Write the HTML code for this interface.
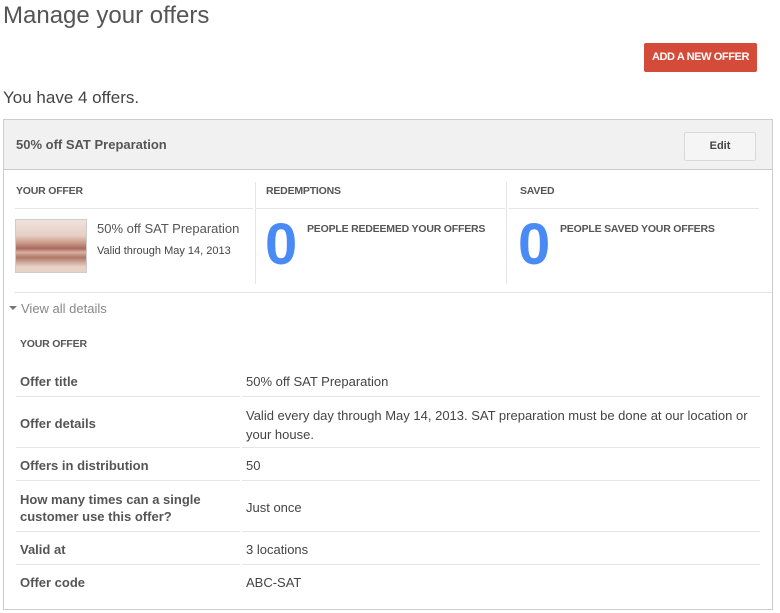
<!DOCTYPE html>
<html><head><meta charset="utf-8"><style>
*{margin:0;padding:0;box-sizing:border-box}
body{width:780px;height:613px;background:#fff;font-family:"Liberation Sans",Arial,sans-serif;color:#444;position:relative;overflow:hidden}
.a{position:absolute;white-space:nowrap}
.h{font-size:10.5px;font-weight:bold;color:#555;letter-spacing:-0.2px}
.hl{position:absolute;height:1px;background:#e5e5e5}
.vl{position:absolute;width:1px;background:#e5e5e5}
.lab{font-size:13px;font-weight:bold;color:#555}
.val{font-size:13px;color:#444}
</style></head><body>
<div class="a" style="left:3px;top:2px;font-size:24px;color:#555">Manage your offers</div>
<div class="a" style="left:644px;top:43px;width:113px;height:29px;background:#d44b39;border-radius:2px;color:#fff;font-size:11px;font-weight:bold;text-align:center;line-height:29px;letter-spacing:-0.4px">ADD A NEW OFFER</div>
<div class="a" style="left:3px;top:88px;font-size:17px;color:#444">You have 4 offers.</div>

<div class="a" style="left:3px;top:119px;width:770px;height:491px;border:1px solid #ccc"></div>
<div class="a" style="left:4px;top:120px;width:768px;height:50px;background:#f1f1f1;border-bottom:1px solid #ccc"></div>
<div class="a" style="left:16px;top:137px;font-size:13px;font-weight:bold;color:#555">50% off SAT Preparation</div>
<div class="a" style="left:684px;top:132px;width:72px;height:29px;border:1px solid #d9d9d9;border-radius:2px;background:#f5f5f5;font-size:11px;font-weight:bold;color:#444;text-align:center;line-height:27px">Edit</div>

<div class="a h" style="left:16px;top:185px">YOUR OFFER</div>
<div class="a h" style="left:266px;top:185px">REDEMPTIONS</div>
<div class="a h" style="left:520px;top:185px">SAVED</div>
<div class="hl" style="left:15px;top:208px;width:238px"></div>
<div class="hl" style="left:256px;top:208px;width:249px"></div>
<div class="hl" style="left:509px;top:208px;width:250px"></div>
<div class="vl" style="left:255px;top:182px;height:102px"></div>
<div class="vl" style="left:506px;top:182px;height:102px"></div>

<div class="a" style="left:15px;top:219px;width:72px;height:54px;border:1px solid #ccc;background:linear-gradient(180deg,#efe3dc 0%,#e6cfc4 30%,#c99685 45%,#a86a5e 55%,#d8b0a2 62%,#b07868 72%,#e8d2c8 90%)"></div>
<div class="a" style="left:97px;top:221px;font-size:13px;color:#555">50% off SAT Preparation</div>
<div class="a" style="left:97px;top:245px;font-size:11px;color:#444">Valid through May 14, 2013</div>

<div class="a" style="left:265px;top:208px;font-size:58px;font-weight:bold;color:#4a8af4;line-height:74px">0</div>
<div class="a h" style="left:307px;top:223px">PEOPLE REDEEMED YOUR OFFERS</div>
<div class="a" style="left:518px;top:208px;font-size:58px;font-weight:bold;color:#4a8af4;line-height:74px">0</div>
<div class="a h" style="left:560px;top:223px">PEOPLE SAVED YOUR OFFERS</div>

<div class="hl" style="left:14px;top:292px;width:758px"></div>
<div class="a" style="left:9px;top:306px;width:0;height:0;border-left:4px solid transparent;border-right:4px solid transparent;border-top:4px solid #777"></div>
<div class="a" style="left:21px;top:301px;font-size:13px;color:#888">View all details</div>

<div class="a h" style="left:20px;top:338px">YOUR OFFER</div>

<div class="a lab" style="left:20px;top:374px">Offer title</div>
<div class="a val" style="left:246px;top:374px">50% off SAT Preparation</div>
<div class="hl" style="left:16px;top:396px;width:224px"></div><div class="hl" style="left:242px;top:396px;width:518px"></div>
<div class="a lab" style="left:20px;top:416px">Offer details</div>
<div class="a val" style="left:246px;top:406px;line-height:19px">Valid every day through May 14, 2013. SAT preparation must be done at our location or<br>your house.</div>
<div class="hl" style="left:16px;top:447px;width:224px"></div><div class="hl" style="left:242px;top:447px;width:518px"></div>
<div class="a lab" style="left:20px;top:458px">Offers in distribution</div>
<div class="a val" style="left:246px;top:458px">50</div>
<div class="hl" style="left:16px;top:480px;width:224px"></div><div class="hl" style="left:242px;top:480px;width:518px"></div>
<div class="a lab" style="left:20px;top:491px;line-height:17px">How many times can a single<br>customer use this offer?</div>
<div class="a val" style="left:246px;top:500px">Just once</div>
<div class="hl" style="left:16px;top:531px;width:224px"></div><div class="hl" style="left:242px;top:531px;width:518px"></div>
<div class="a lab" style="left:20px;top:542px">Valid at</div>
<div class="a val" style="left:246px;top:542px">3 locations</div>
<div class="hl" style="left:16px;top:564px;width:224px"></div><div class="hl" style="left:242px;top:564px;width:518px"></div>
<div class="a lab" style="left:20px;top:575px">Offer code</div>
<div class="a val" style="left:246px;top:575px">ABC-SAT</div>
</body></html>
